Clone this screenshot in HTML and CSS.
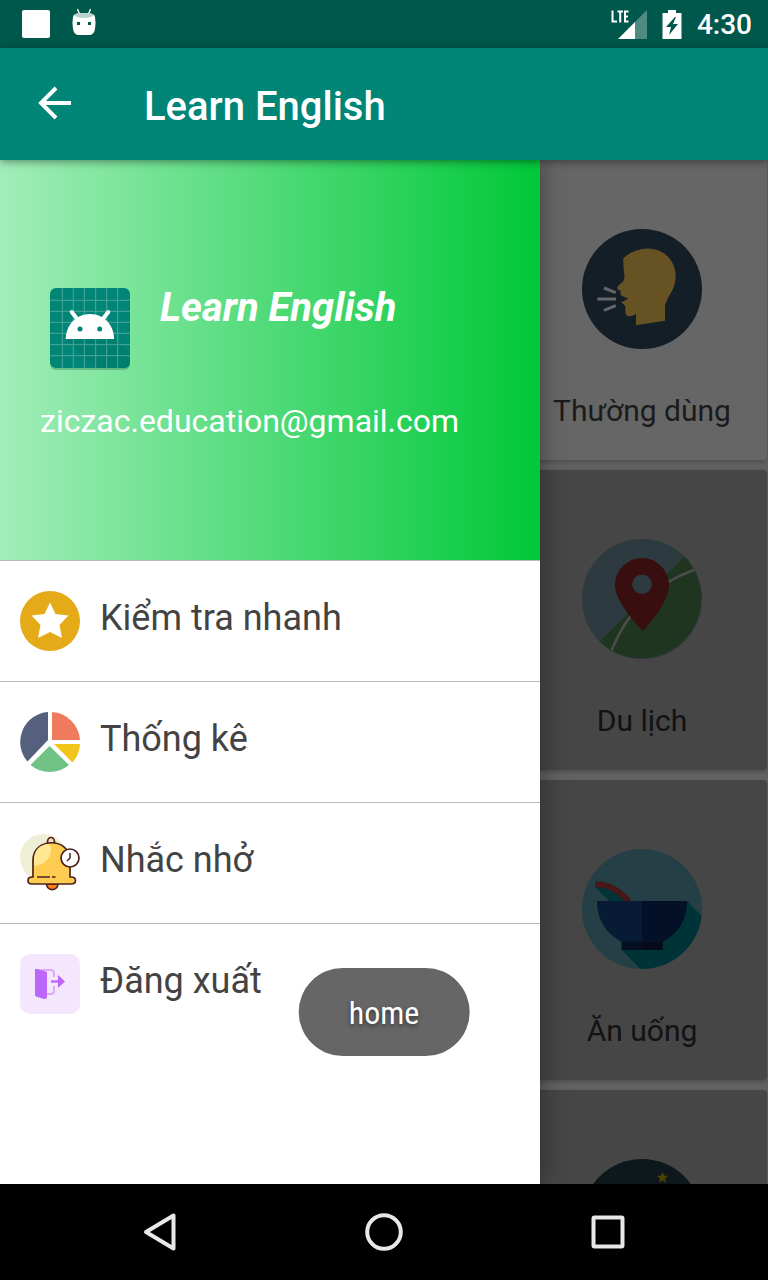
FILE: index.html
```html
<!DOCTYPE html>
<html lang="vi">
<head>
<meta charset="utf-8">
<meta name="viewport" content="width=device-width, initial-scale=1">
<title>Learn English</title>
<link rel="stylesheet" href="styles.css">
</head>
<body>
<div class="status-bar">
  <div class="status-left">
    <svg width="28" height="28" viewBox="0 0 28 28" aria-hidden="true"><rect width="28" height="28" rx="2" fill="#fff"/></svg>
    <svg width="24" height="32" viewBox="0 0 24 32" aria-hidden="true">
      <path d="M5.500 1l2 5M18.500 1l-2 5" stroke="#fff" stroke-width="1.300"/>
      <path d="M1 9Q1 5 12 5T23 9Q24 14 23 21Q22 27 17 27H7Q2 27 1 21Q0 14 1 9Z" fill="#fff"/>
      <path d="M2 7Q3 5 12 5T22 7Q20 10 12 10T2 7Z" fill="#b8d2ce"/>
      <path d="M5 14h3v3H5zM16 14h3v3h-3z" fill="#00574b"/>
    </svg>
  </div>
  <div class="status-right">
    <svg width="36" height="30" viewBox="0 0 36 30" aria-hidden="true">
      <path d="M36 1V30H24V13Z" fill="#4f8b83"/>
      <path d="M7 30L24 13V30Z" fill="#fff"/>
      <path d="M1.500 1.500V12.500H6M6.500 2.500H12M9.200 2.500V13.500M17.500 2.500H14V12.500H17.500M14 7.500H17" fill="none" stroke="#fff" stroke-width="2"/>
    </svg>
    <svg width="20" height="30" viewBox="0 0 20 30" aria-hidden="true">
      <path d="M6 1h8v3h5.500v26H.500V4H6Z" fill="#fff"/>
      <path d="M13 8L4 18h5l-2 8 9-11h-5l3-7Z" fill="#00574b"/>
    </svg>
    <time class="clock">4:30</time>
  </div>
</div>

<header class="app-bar">
  <button class="back" type="button" aria-label="Back">
    <svg width="34" height="34" viewBox="0 0 34 34" fill="none" stroke="#fff" stroke-width="4" aria-hidden="true"><path d="M18 2L3 17L18 32M3 17H33"/></svg>
  </button>
  <h1 class="app-title">Learn English</h1>
</header>

<main class="content">
  <nav class="drawer">
    <div class="drawer-header">
      <div class="brand">
        <svg class="logo" width="100" height="100" viewBox="-10 -10 100 100" aria-hidden="true">
          <rect x="0" y="2" width="80" height="80" rx="6" fill="#2f7d58" opacity=".4"/>
          <rect width="80" height="80" rx="6" fill="#008577"/>
          <path d="M16 51L45 80H74Q80 80 80 74V66L56 43Z" fill="#007a6c" opacity=".7"/>
          <path d="M12.300 0V80M23.300 0V80M34.300 0V80M45.700 0V80M56.700 0V80M67.700 0V80M0 12.300H80M0 23.300H80M0 34.300H80M0 45.300H80M0 56.700H80M0 67.700H80" stroke="#5fb0a6" stroke-width="1" opacity=".8"/>
          <path d="M21.700 24L28 32M58.300 24L52 32" stroke="#fff" stroke-width="4" stroke-linecap="round"/>
          <path d="M15.700 51C16 37 26 26 40 26S64 37 64 51Z" fill="#fff"/>
          <circle cx="30" cy="41" r="2.500" fill="#008577"/><circle cx="49.700" cy="41" r="2.500" fill="#008577"/>
        </svg>
        <h2 class="brand-name">Learn English</h2>
      </div>
      <p class="email">ziczac.education@gmail.com</p>
    </div>
    <ul class="menu">
      <li><button class="menu-item" type="button">
        <svg width="60" height="60" viewBox="0 0 60 60" aria-hidden="true"><circle cx="30" cy="30" r="30" fill="#e4aa17"/><path d="M30 11.500L35.500 23L48.500 24.500L39.500 34L42 47L30 41L18 47L20.500 34L11.500 24.500L24.500 23Z" fill="#fff"/></svg>
        <span>Kiểm tra nhanh</span></button></li>
      <li><button class="menu-item" type="button">
        <svg width="60" height="60" viewBox="0 0 60 60" aria-hidden="true">
          <path d="M28 0V28L7.500 49.500A30 30 0 0 1 28 0Z" fill="#55607f"/>
          <path d="M32 0A30 30 0 0 1 60 28H32Z" fill="#ef7a5e"/>
          <path d="M34 32H60A30 30 0 0 1 52.500 50.500Z" fill="#f2c51b"/>
          <path d="M29.500 34L49 53A30 30 0 0 1 10.500 53Z" fill="#71c285"/>
        </svg>
        <span>Thống kê</span></button></li>
      <li><button class="menu-item" type="button">
        <svg width="60" height="60" viewBox="0 0 60 60" aria-hidden="true">
          <circle cx="23.500" cy="24.500" r="23.500" fill="#efefd5"/>
          <path d="M26.500 51C27 58.500 37.500 58.500 38 51Z" fill="#ff7d1c" stroke="#4d221d" stroke-width="1.700"/>
          <path d="M27.500 10V8.500Q28 4.500 31 4.500T34.500 8.500V10" fill="#f4dec4" stroke="#4d221d" stroke-width="1.700"/>
          <path d="M13 44V27C13 4 50 4 50 27V44H51Q55.500 44 55.500 47.500T51 51H12Q8 51 8 47.500T12 44Z" fill="#ffcc52" stroke="#4d221d" stroke-width="1.700"/>
          <path d="M14 33V26Q15 13 27 11Q32 11 31 18Q29 31 14 33Z" fill="#ffe891"/>
          <path d="M17 44H30M32 44H35.500" stroke="#4d221d" stroke-width="1.700"/>
          <circle cx="50" cy="25" r="9" fill="#fff" stroke="#4d221d" stroke-width="1.700"/>
          <path d="M50 20V25L47 28" fill="none" stroke="#4d221d" stroke-width="1.500"/>
        </svg>
        <span>Nhắc nhở</span></button></li>
      <li><button class="menu-item" type="button">
        <svg width="60" height="60" viewBox="0 0 60 60" aria-hidden="true">
          <rect width="60" height="60" rx="10" fill="#f4e6fd"/>
          <path d="M21 16H31Q34 16 34 19V23M34 32V37Q34 40 31 40H26" fill="none" stroke="#daa8fc" stroke-width="2"/>
          <path d="M15 15H18L27 18V43Q27 45 24 45L16 42.500Q15 42 15 40Z" fill="#bd66fa"/>
          <path d="M31 27.500H39" stroke="#bd66fa" stroke-width="2.400"/>
          <path d="M38 21L45 27.500L38 34Z" fill="#bd66fa"/>
        </svg>
        <span>Đăng xuất</span></button></li>
    </ul>
  </nav>

  <section class="topics">
    <article class="card card-first">
      <svg width="120" height="120" viewBox="0 0 120 120" aria-hidden="true">
        <circle cx="60" cy="60" r="60" fill="#141e26"/>
        <path d="M41.300 29.300Q52 19.500 66 19.500C82 19.500 94 32 93.700 48C93 64 83 68 83 80V91.700L54 96.300V85Q50 87.500 47 87.300Q43.500 87 43.300 83V77L39.300 73.300L46.300 69.700L38.700 66.300V61.700Q35 61 35.300 58C37 55 42 53 42.300 49.500C43 45 41 40 41.300 29.300Z" fill="#665222"/>
        <path d="M15.300 70H34M22 59L33.700 63.700M22 81.300L33.700 76.700" stroke="#65656a" stroke-width="3"/>
      </svg>
      <h3 class="card-label">Thường dùng</h3>
    </article>
    <article class="card">
      <svg width="120" height="120" viewBox="0 0 120 120" aria-hidden="true">
        <circle cx="60" cy="60" r="60" fill="#2d3a3f"/>
        <path d="M102.420 17.580A60 60 0 0 1 17.580 102.420Z" fill="#1f3520"/>
        <path d="M112 31Q54 51 29.700 111" fill="none" stroke="#4c4c4c" stroke-width="2.500"/>
        <path d="M60.700 92C54 85 33 62 33 46A27 27 0 0 1 87 46C87 62 68 85 60.700 92Z" fill="#380e0f"/>
        <circle cx="60" cy="45.300" r="9.800" fill="#2d3a3f"/>
      </svg>
      <h3 class="card-label">Du lịch</h3>
    </article>
    <article class="card">
      <svg width="120" height="120" viewBox="0 0 120 120" aria-hidden="true">
        <circle cx="60" cy="60" r="60" fill="#243f45"/>
        <path d="M105 52L119.600 67A60 60 0 0 1 58.500 120L39.700 101L48 80ZM13.300 38L29 54H48Q35 38 13.300 38Z" fill="#003338"/>
        <path d="M13.300 35.700Q31 34 47 53" fill="none" stroke="#461819" stroke-width="6"/>
        <path d="M15 52H60V101H39.700V92.700Q15 80 15 52Z" fill="#081b35"/>
        <path d="M60 52H105Q105 80 80.700 92.700H60Z" fill="#041027"/>
        <path d="M39.700 92.700H60V101H39.700Z" fill="#040f24"/>
        <path d="M60 92.700H80.700V101H60Z" fill="#070a19"/>
      </svg>
      <h3 class="card-label">Ăn uống</h3>
    </article>
    <article class="card">
      <svg width="120" height="120" viewBox="0 0 120 120" aria-hidden="true">
        <circle cx="60" cy="60" r="60" fill="#0e181c"/>
        <path d="M80.500 13L82 16.500L86 17L83 19.500L84 23.500L80.500 21.500L77 23.500L78 19.500L75 17L79 16.500Z" fill="#4d4300"/>
      </svg>
    </article>
  </section>
</main>

<footer class="nav-bar">
  <button type="button" aria-label="Back"><svg width="40" height="40" viewBox="0 0 40 40" aria-hidden="true"><path d="M6 20L33.500 3.500V36.500Z"/></svg></button>
  <button type="button" aria-label="Home"><svg width="40" height="40" viewBox="0 0 40 40" aria-hidden="true"><circle cx="20" cy="20" r="16.800"/></svg></button>
  <button type="button" aria-label="Overview"><svg width="40" height="40" viewBox="0 0 40 40" aria-hidden="true"><rect x="5.500" y="5.500" width="29" height="29" rx="1"/></svg></button>
</footer>

<div class="toast" role="status">home</div>
</body>
</html>
```

FILE: styles.css
```css
* { box-sizing: border-box; }

body {
  margin: 0;
  height: 100vh;
  display: flex;
  flex-direction: column;
  overflow: hidden;
  background: #000;
  font-family: Roboto, "Noto Sans", sans-serif;
}

h1, h2, h3, p, ul { margin: 0; padding: 0; }
ul { list-style: none; }
svg { display: block; flex-shrink: 0; }

button {
  padding: 0;
  border: 0;
  background: none;
  font: inherit;
  color: inherit;
}

.status-bar {
  flex: 0 0 48px;
  display: flex;
  align-items: center;
  justify-content: space-between;
  padding: 0 16px 0 22px;
  background: #00574b;
}

.status-left, .status-right { display: flex; align-items: center; }
.status-left { gap: 22px; }
.status-right { gap: 15px; }

.clock {
  padding-top: 2px;
  color: #fff;
  font-size: 28px;
  font-weight: 500;
  line-height: 46px;
}

.app-bar {
  position: relative;
  z-index: 3;
  flex: 0 0 112px;
  display: flex;
  align-items: center;
  gap: 72px;
  padding: 0 38px;
  background: #008577;
  box-shadow: 0 2px 8px rgba(0, 0, 0, .4);
}

.back { padding-bottom: 2px; }

.app-title {
  color: #fff;
  font-size: 40px;
  font-weight: 500;
  line-height: 48px;
  padding-top: 6px;
}

.content {
  flex: 1;
  min-height: 0;
  display: flex;
  overflow: hidden;
  background: #626262;
}

.drawer {
  position: relative;
  z-index: 2;
  flex: 0 0 540px;
  background: #fff;
  box-shadow: 0 0 24px rgba(0, 0, 0, .4);
}

.drawer-header {
  height: 400px;
  padding: 118px 40px 0;
  background: linear-gradient(to right, #a1edb9, #00c838);
  color: #fff;
}

.brand { display: flex; gap: 20px; }

.brand-name {
  padding-top: 6px;
  font-size: 40px;
  font-style: italic;
  font-weight: 700;
  line-height: 48px;
}

.email {
  margin-top: 24px;
  font-size: 32px;
  line-height: 38px;
}

.menu li { border-top: 1px solid #b9b9b9; }

.menu-item {
  display: flex;
  align-items: flex-start;
  gap: 20px;
  width: 100%;
  padding: 30px 20px;
  color: #434343;
  font-size: 36px;
  line-height: 54px;
  text-align: left;
}

.topics {
  flex: 1;
  display: flex;
  flex-direction: column;
  gap: 10px;
  margin-left: -23px;
  padding-right: 1px;
}

.card {
  flex: 0 0 300px;
  display: flex;
  flex-direction: column;
  align-items: center;
  gap: 44px;
  padding-top: 69px;
  border-radius: 4px;
  background: #464646;
  box-shadow: 0 2px 4px rgba(0, 0, 0, .2);
}

.card-first { background: #666; }

.card-label {
  color: #121212;
  font-size: 30px;
  font-weight: 400;
  line-height: 36px;
}

.card-first .card-label { color: #1b1b1b; }

.nav-bar {
  position: relative;
  z-index: 3;
  flex: 0 0 96px;
  display: flex;
  align-items: center;
  justify-content: center;
  gap: 184px;
  background: #000;
}

.nav-bar svg {
  fill: none;
  stroke: #e8e8e8;
  stroke-width: 4;
  stroke-linejoin: round;
}

.toast {
  position: fixed;
  z-index: 4;
  left: 50%;
  bottom: 224px;
  transform: translateX(-50%);
  padding: 25px 50px 23px;
  border-radius: 44px;
  background: #666;
  color: #fff;
  font-family: "Roboto Condensed", Roboto, sans-serif;
  font-size: 32px;
  line-height: 40px;
  text-shadow: 0 2px 4px rgba(0, 0, 0, .5);
}
```
